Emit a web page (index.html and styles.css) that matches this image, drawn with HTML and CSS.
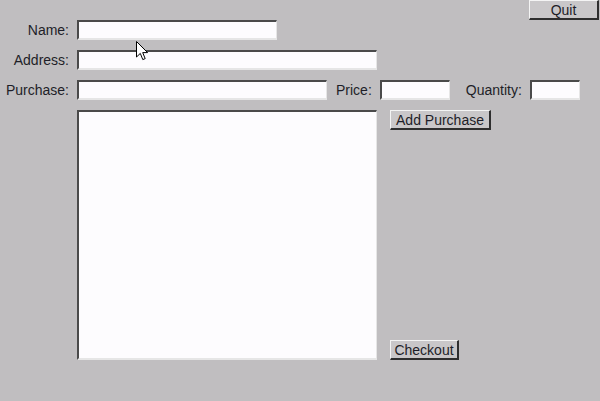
FILE: index.html
```html
<!DOCTYPE html>
<html>
<head>
<meta charset="utf-8">
<title>Order Form</title>
<link rel="stylesheet" href="styles.css">
</head>
<body>
<div class="app">
  <div class="topbar">
    <button class="btn quit">Quit</button>
  </div>
  <div class="row first">
    <label class="label">Name:</label>
    <input class="field name" type="text">
  </div>
  <div class="row">
    <label class="label">Address:</label>
    <input class="field address" type="text">
  </div>
  <div class="row">
    <label class="label">Purchase:</label>
    <input class="field purchase" type="text">
    <label class="label-inline price-label">Price:</label>
    <input class="field price" type="text">
    <label class="label-inline qty-label">Quantity:</label>
    <input class="field qty" type="text">
  </div>
  <div class="row main">
    <div class="spacer"></div>
    <textarea class="list"></textarea>
    <div class="actions">
      <button class="btn add">Add Purchase</button>
      <button class="btn checkout">Checkout</button>
    </div>
  </div>
  <svg class="cursor" width="13" height="20" viewBox="0 0 13 20">
    <path d="M0.5 0.5 L0.5 16 L4.3 12.4 L6.8 18.6 L9.2 17.6 L6.7 11.6 L11.6 11.6 Z" fill="#fff" stroke="#000" stroke-width="1" stroke-linejoin="miter"/>
  </svg>
</div>
</body>
</html>
```
FILE: styles.css
```css
html, body {
  margin: 0;
  padding: 0;
}
body {
  background: #c0bec0;
  font-family: "Liberation Sans", Arial, sans-serif;
  font-size: 14px;
  color: #1e1e28;
}
.app {
  position: relative;
  width: 600px;
  height: 401px;
  overflow: hidden;
}
.topbar {
  display: flex;
  justify-content: flex-end;
  height: 20px;
  padding-right: 1px;
}
.btn {
  box-sizing: border-box;
  height: 20px;
  padding: 0;
  margin: 0;
  font-family: "Liberation Sans", Arial, sans-serif;
  font-size: 14px;
  line-height: 16px;
  color: #1e1e28;
  background: #c9c7c9;
  border-style: solid;
  border-width: 1px 2px 2px 1px;
  border-color: #f4f4f4 #2e2e2e #2e2e2e #f4f4f4;
  text-align: center;
}
.quit {
  width: 70px;
}
.row {
  display: flex;
  align-items: center;
  height: 20px;
  margin-top: 10px;
}
.row.first {
  margin-top: 0;
}
.label {
  width: 69px;
  margin-right: 8px;
  text-align: right;
  white-space: nowrap;
}
.label-inline {
  margin-right: 8px;
  white-space: nowrap;
}
.field {
  box-sizing: border-box;
  height: 20px;
  margin: 0;
  padding: 0 3px;
  background: #fdfcfe;
  border-style: solid;
  border-width: 2px 1px 2px 2px;
  border-color: #4a4a4a #e6e6e6 #e6e6e6 #4a4a4a;
  font-family: "Liberation Sans", Arial, sans-serif;
  font-size: 14px;
  outline: none;
}
.name { width: 200px; }
.address { width: 300px; }
.purchase { width: 250px; }
.price-label { margin-left: 9px; }
.price { width: 70px; }
.qty-label { margin-left: 16px; }
.qty { width: 50px; }
.row.main {
  height: 250px;
  align-items: stretch;
}
.spacer {
  width: 77px;
  flex: none;
}
.list {
  box-sizing: border-box;
  width: 300px;
  height: 250px;
  margin: 0;
  padding: 2px;
  resize: none;
  background: #fdfcfe;
  border-style: solid;
  border-width: 2px 1px 2px 2px;
  border-color: #4a4a4a #e6e6e6 #e6e6e6 #4a4a4a;
  outline: none;
}
.actions {
  display: flex;
  flex-direction: column;
  justify-content: space-between;
  align-items: flex-start;
  margin-left: 13px;
}
.add { width: 101px; }
.checkout { width: 69px; }
.cursor {
  position: absolute;
  left: 136px;
  top: 41px;
}
```
